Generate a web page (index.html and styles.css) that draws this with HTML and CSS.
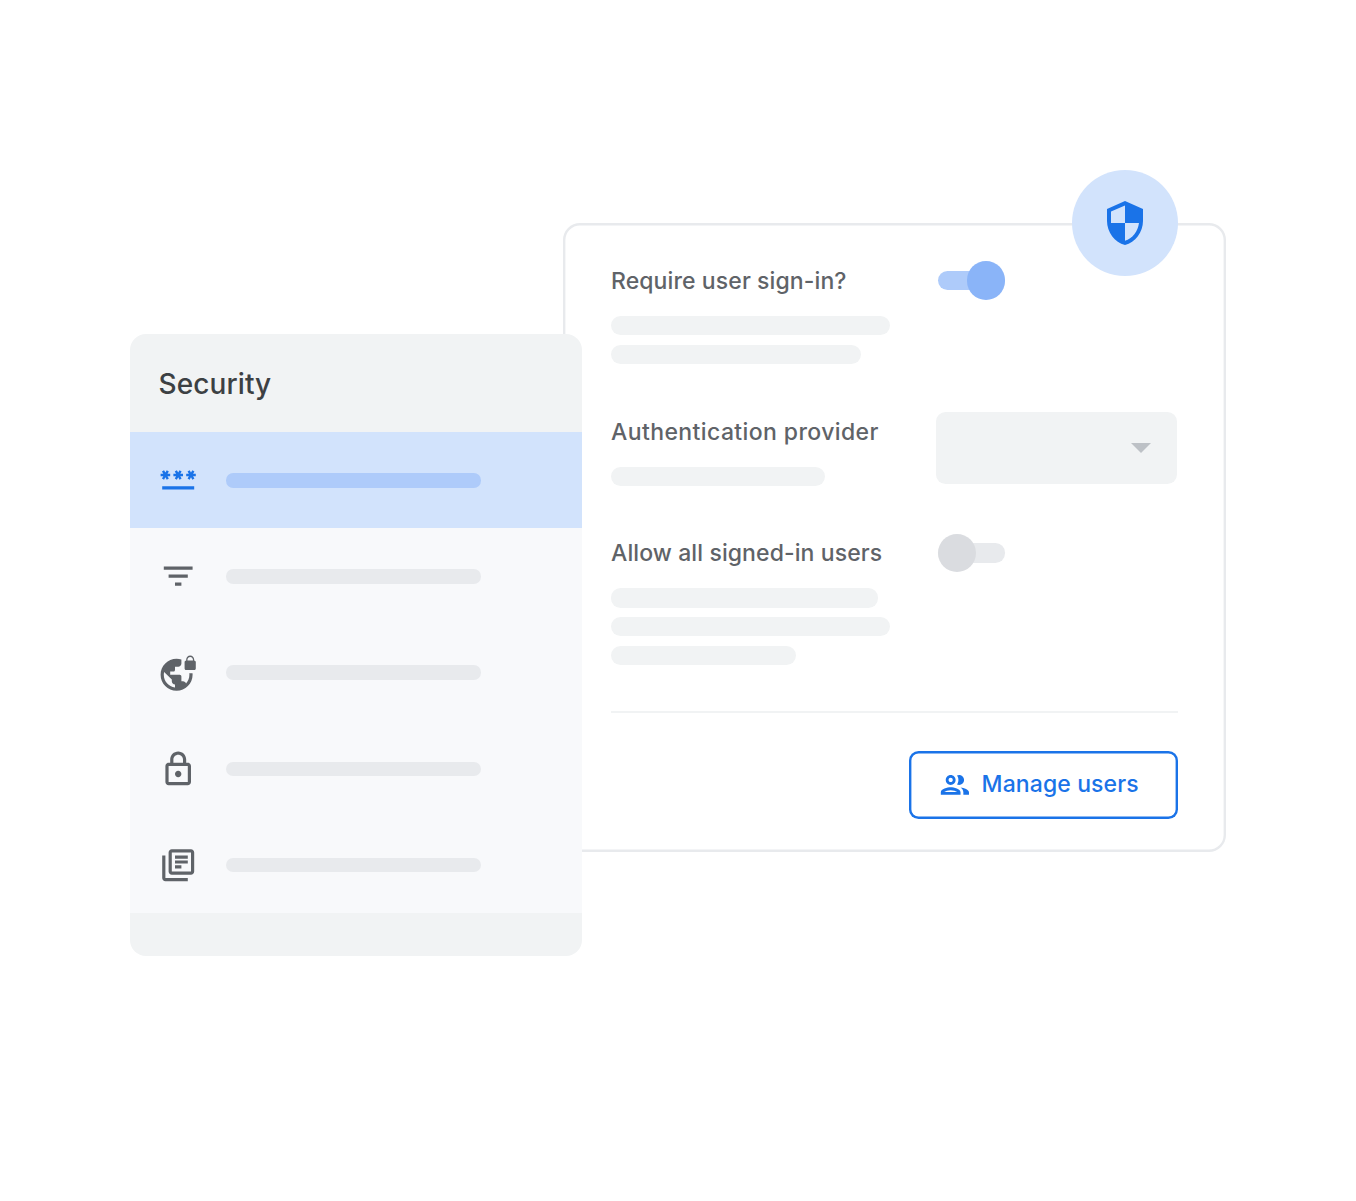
FILE: index.html
```html
<!DOCTYPE html>
<html lang="en">
<head>
    <meta charset="UTF-8">
    <meta name="viewport" content="width=device-width, initial-scale=1.0">
    <title>Security</title>
    <link rel="stylesheet" href="styles.css">
</head>
<body>
    <div class="container">
        <nav class="sidebar">
            <h1>Security</h1>
            <div class="item active">
                <svg class="icon icon-password" viewBox="0 0 24 24"><path d="M2 17h20v2H2v-2zm1.15-4.05L4 11.47l.85 1.48 1.3-.75-.85-1.48H7v-1.5H5.3l.85-1.47L4.85 7 4 8.47 3.15 7l-1.3.75.85 1.47H1v1.5h1.7l-.85 1.48 1.3.75zm6.7-.75l1.3.75.85-1.48.85 1.48 1.3-.75-.85-1.48H15v-1.5h-1.7l.85-1.47-1.3-.75L12 8.47 11.15 7l-1.3.75.85 1.47H9v1.5h1.7l-.85 1.48zM23 9.22h-1.7l.85-1.47-1.3-.75L20 8.47 19.15 7l-1.3.75.85 1.47H17v1.5h1.7l-.85 1.48 1.3.75.85-1.48.85 1.48 1.3-.75-.85-1.48H23v-1.5z"/></svg>
                <span class="line"></span>
            </div>
            <div class="item">
                <svg class="icon" viewBox="0 0 24 24"><path d="M10 18h4v-2h-4v2zM3 6v2h18V6H3zm3 7h12v-2H6v2z"/></svg>
                <span class="line"></span>
            </div>
            <div class="item">
                <svg class="icon icon-low" viewBox="0 0 24 24"><path d="M22 4v-.5C22 2.12 20.88 1 19.5 1S17 2.12 17 3.5V4c-.55 0-1 .45-1 1v4c0 .55.45 1 1 1h5c.55 0 1-.45 1-1V5c0-.55-.45-1-1-1zm-.8 0h-3.4v-.5c0-.94.76-1.7 1.7-1.7s1.7.76 1.7 1.7V4zm-2.28 8c.04.33.08.66.08 1 0 2.08-.8 3.97-2.1 5.39-.26-.81-1-1.39-1.9-1.39h-1v-3c0-.55-.45-1-1-1H7v-2h2c.55 0 1-.45 1-1V8h2c1.1 0 2-.9 2-2V3.46c-.95-.3-1.95-.46-3-.46C5.48 3 1 7.48 1 13s4.48 10 10 10 10-4.48 10-10c0-.34-.02-.67-.05-1h-2.03zM10 20.93c-3.95-.49-7-3.85-7-7.93 0-.62.08-1.21.21-1.79L8 16v1c0 1.1.9 2 2 2v1.93z"/></svg>
                <span class="line"></span>
            </div>
            <div class="item">
                <svg class="icon icon-low" viewBox="0 0 24 24"><path d="M12 17c1.1 0 2-.9 2-2s-.9-2-2-2-2 .9-2 2 .9 2 2 2zm6-9h-1V6c0-2.76-2.24-5-5-5S7 3.24 7 6v2H6c-1.1 0-2 .9-2 2v10c0 1.1.9 2 2 2h12c1.1 0 2-.9 2-2V10c0-1.1-.9-2-2-2zM9 6c0-1.66 1.34-3 3-3s3 1.34 3 3v2H9V6zm9 14H6V10h12v10z"/></svg>
                <span class="line"></span>
            </div>
            <div class="item">
                <svg class="icon" viewBox="0 0 24 24"><path d="M4 6H2v14c0 1.1.9 2 2 2h14v-2H4V6zm16-4H8c-1.1 0-2 .9-2 2v12c0 1.1.9 2 2 2h12c1.1 0 2-.9 2-2V4c0-1.1-.9-2-2-2zm0 14H8V4h12v12zM10 9h8v2h-8zm0 3h4v2h-4zm0-6h8v2h-8z"/></svg>
                <span class="line"></span>
            </div>
        </nav>

        <main class="panel">
            <div class="badge">
                <svg viewBox="0 0 24 24"><path d="M12 1L3 5v6c0 5.55 3.84 10.74 9 12 5.16-1.26 9-6.45 9-12V5l-9-4zm0 10.99h7c-.53 4.12-3.28 7.79-7 8.94V12H5V6.3l7-3.11v8.8z"/></svg>
            </div>

            <section class="setting">
                <div class="info">
                    <h2>Require user sign-in?</h2>
                    <div class="bar w-full"></div>
                    <div class="bar w-long"></div>
                </div>
                <div class="toggle on"></div>
            </section>
            <section class="setting">
                <div class="info">
                    <h2 class="spaced">Authentication provider</h2>
                    <div class="bar w-mid"></div>
                </div>
                <div class="select">
                    <svg viewBox="0 0 20 10"><path d="M0 0h20L10 10z"/></svg>
                </div>
            </section>
            <section class="setting">
                <div class="info">
                    <h2>Allow all signed-in users</h2>
                    <div class="bar w-wide"></div>
                    <div class="bar w-full"></div>
                    <div class="bar w-short"></div>
                </div>
                <div class="toggle"></div>
            </section>

            <footer class="actions">
                <button>
                    <svg viewBox="0 0 24 24"><path d="M9 13.75c-2.34 0-7 1.17-7 3.5V19h14v-1.75c0-2.33-4.66-3.5-7-3.5zM4.34 17c.84-.58 2.87-1.25 4.66-1.25s3.82.67 4.66 1.25H4.34zM9 12c1.93 0 3.5-1.57 3.5-3.5S10.93 5 9 5 5.5 6.57 5.5 8.5 7.07 12 9 12zm0-5c.83 0 1.5.67 1.5 1.5S9.83 10 9 10s-1.5-.67-1.5-1.5S8.17 7 9 7zm7.04 6.81c1.16.84 1.96 1.96 1.96 3.44V19h4v-1.75c0-2.02-3.5-3.17-5.96-3.44zM15 12c1.93 0 3.5-1.57 3.5-3.5S16.93 5 15 5c-.54 0-1.04.13-1.5.35.63.89 1 1.98 1 3.15s-.37 2.26-1 3.15c.46.22.96.35 1.5.35z"/></svg>
                    <span>Manage users</span>
                </button>
            </footer>
        </main>
    </div>
</body>
</html>
```
FILE: styles.css
```css
:root {
    --blue: #1a73e8;
    --blue-light: #d2e3fc;
    --blue-mid: #aecbfa;
    --gray-bg: #f1f3f4;
    --gray-line: #e8eaed;
    --gray-text: #5f6368;
}

* {
    box-sizing: border-box;
}

body {
    font-family: Inter, "Liberation Sans", sans-serif;
    background: #fff;
    color: var(--gray-text);
    margin: 0;
}

h1, h2 {
    margin: 0;
    font-weight: 500;
}

.container {
    display: flex;
    align-items: flex-start;
    padding: 222.6px 130px 0;
}

/* Sidebar */
.sidebar {
    position: relative;
    z-index: 1;
    flex: none;
    width: 452px;
    height: 622px;
    margin-top: 111.2px;
    background: var(--gray-bg);
    border-radius: 16px;
    overflow: hidden;
}

h1 {
    height: 98.6px;
    padding-left: 28.5px;
    line-height: 100px;
    font-size: 28px;
    letter-spacing: 0.1px;
    color: #3c4043;
}

.item {
    display: flex;
    align-items: center;
    gap: 28.8px;
    height: 96.1px;
    padding-left: 28.8px;
    background: #f8f9fb;
}

.item.active {
    background: var(--blue-light);
}

.icon {
    width: 38.4px;
    height: 38.4px;
    fill: var(--gray-text);
}

.active .icon {
    fill: var(--blue);
}

.icon-password {
    margin-bottom: 4px;
}

.icon-low {
    margin-top: 1.2px;
}

.line {
    width: 255px;
    height: 14.4px;
    border-radius: 7.2px;
    background: var(--gray-line);
}

.active .line {
    background: var(--blue-mid);
}

/* Settings panel */
.panel {
    position: relative;
    flex: none;
    width: 663.4px;
    height: 629.6px;
    margin-left: -19.4px;
    padding: 38.7px 48.4px 0;
    border-radius: 17px;
    box-shadow: inset 0 0 0 2.4px var(--gray-line);
}

.badge {
    position: absolute;
    top: -52.8px;
    right: 48px;
    display: flex;
    align-items: center;
    justify-content: center;
    width: 106px;
    height: 106px;
    border-radius: 50%;
    background: var(--blue-light);
}

.badge svg {
    width: 48px;
    height: 48px;
    fill: var(--blue);
}

.setting {
    display: grid;
    grid-template-columns: 325.3px 241px;
    align-items: start;
    margin-bottom: 48px;
}

.info {
    display: flex;
    flex-direction: column;
    gap: 9.6px;
    padding-top: 4.7px;
}

h2 {
    height: 30px;
    margin-bottom: 10.4px;
    line-height: 31px;
    font-size: 23px;
    letter-spacing: 0.1px;
    white-space: nowrap;
}

.spaced {
    letter-spacing: 0.4px;
}

.bar {
    height: 19.2px;
    border-radius: 9.6px;
    background: var(--gray-bg);
}

.w-full { width: 278.6px; }
.w-wide { width: 266.6px; }
.w-long { width: 250px; }
.w-mid { width: 214px; }
.w-short { width: 185px; }

.toggle {
    position: relative;
    display: flex;
    align-items: center;
    width: 67.3px;
    height: 38.4px;
    margin-left: 1.3px;
}

.toggle::before {
    content: "";
    width: 100%;
    height: 19.2px;
    border-radius: 9.6px;
    background: var(--gray-line);
}

.toggle::after {
    content: "";
    position: absolute;
    left: 0;
    width: 38.4px;
    height: 38.4px;
    border-radius: 50%;
    background: #dadce0;
}

.toggle.on::before {
    background: var(--blue-mid);
}

.toggle.on::after {
    left: auto;
    right: 0;
    background: #8ab4f8;
}

.select {
    display: flex;
    align-items: center;
    justify-content: flex-end;
    height: 72px;
    padding-right: 26px;
    border-radius: 9.6px;
    background: var(--gray-bg);
}

.select svg {
    width: 20px;
    height: 10px;
    fill: #bdc1c6;
}

.actions {
    display: flex;
    justify-content: flex-end;
    margin-top: -2px;
    padding-top: 38.2px;
    border-top: 2.4px solid var(--gray-bg);
}

button {
    display: flex;
    align-items: center;
    gap: 10px;
    width: 268.6px;
    height: 67.6px;
    padding: 0 0 0 28.8px;
    border: none;
    border-radius: 9.6px;
    box-shadow: inset 0 0 0 2.4px var(--blue);
    background: #fff;
    font-family: inherit;
    font-size: 23px;
    font-weight: 500;
    letter-spacing: 0.1px;
    color: var(--blue);
    white-space: nowrap;
}

button span {
    margin-bottom: 2px;
}

button svg {
    width: 33.8px;
    height: 33.8px;
    fill: var(--blue);
}
```
